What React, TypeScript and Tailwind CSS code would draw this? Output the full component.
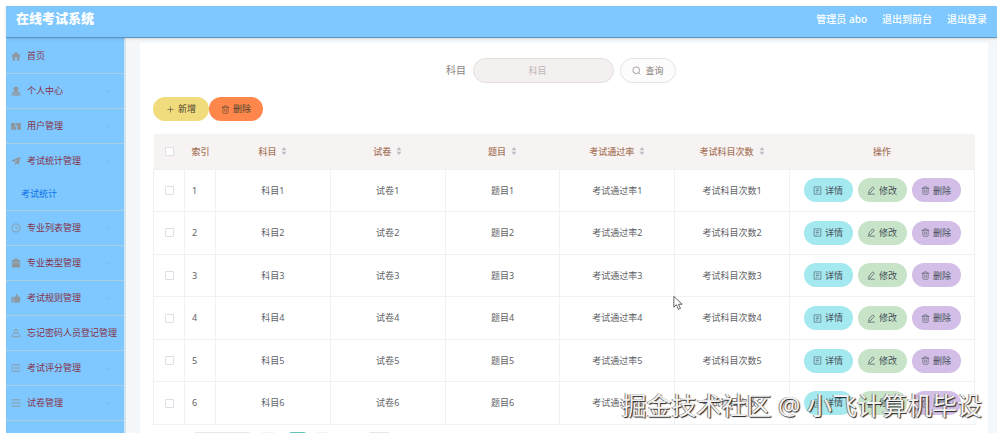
import type { ReactNode } from "react";
import { ChevronDown, ChevronUp, Plus, Trash2 } from "lucide-react";

type MenuItem = {
  label: string;
  icon: ReactNode;
  arrow?: "up" | "down";
  children?: string[];
};

const solid = (d: string) => (
  <svg viewBox="0 0 16 16" className="h-[10px] w-[10px]" fill="currentColor" aria-hidden="true">
    <path d={d} />
  </svg>
);

const outline = (d: string) => (
  <svg
    viewBox="0 0 16 16"
    className="h-[10px] w-[10px]"
    fill="none"
    stroke="currentColor"
    strokeWidth="1.5"
    aria-hidden="true"
  >
    <path d={d} />
  </svg>
);

const MENU: MenuItem[] = [
  { label: "首页", icon: solid("M8 1 1 7.5V9h1.500v6h4v-4.500h3V15h4V9H15V7.500z") },
  {
    label: "个人中心",
    icon: solid("M8 1a4 4 0 0 1 2 7.500v1h4l1 2H1l1-2h4v-1A4 4 0 0 1 8 1zM1 12.500h14V15H1z"),
    arrow: "down",
  },
  {
    label: "用户管理",
    icon: solid("M0 3h7v5H6v1h2v5H0V9h1V8H0zM8.500 3H16v5h-1v1h1v5H9.500V9h1V8h-2z"),
    arrow: "down",
  },
  {
    label: "考试统计管理",
    icon: solid("M15 1 .5 7 5 9.500 12 4 6.500 10.500V15l2.500-3 3.500 1.500z"),
    arrow: "up",
    children: ["考试统计"],
  },
  {
    label: "专业列表管理",
    icon: outline("M8 1.500a6.500 6.500 0 1 0 0 13a6.500 6.500 0 1 0 0-13zM8 4.500V8h3.500"),
    arrow: "down",
  },
  {
    label: "专业类型管理",
    icon: solid("M5 1h6v2h3.500v4h-13V3H5zM1.500 8h13v7h-13z"),
    arrow: "down",
  },
  {
    label: "考试规则管理",
    icon: solid("M1 6h3v9H1zM5 6h2l2-4.500 2 1V6h4l-1 9H5z"),
    arrow: "down",
  },
  {
    label: "忘记密码人员登记管理",
    icon: outline("M8 2a3 3 0 1 0 0 6a3 3 0 1 0 0-6zM6.500 8 2 11.500V14h12v-2.500L9.500 8"),
  },
  {
    label: "考试评分管理",
    icon: outline("M1 3h14M6 8h9M1 13h14M1 6.500 3.500 8 1 9.500"),
    arrow: "down",
  },
  { label: "试卷管理", icon: outline("M1 3h14M1 8h14M1 13h14"), arrow: "down" },
];

const COLUMNS = ["科目", "试卷", "题目", "考试通过率", "考试科目次数"];
const ROWS = [1, 2, 3, 4, 5, 6];

function SortArrows() {
  return (
    <svg viewBox="0 0 6 10" className="h-[8px] w-[6px] text-[#b9bcc4]" fill="currentColor" aria-hidden="true">
      <path d="M3 0 6 4H0zM3 10 0 6h6z" />
    </svg>
  );
}

function DetailIcon() {
  return (
    <svg viewBox="0 0 16 16" className="h-[9px] w-[9px]" fill="none" stroke="currentColor" aria-hidden="true">
      <path d="M2 1.500h12v13H2zM5 5h6M5 8h6M5 11h3M10 11h1" />
    </svg>
  );
}

function EditIcon() {
  return (
    <svg viewBox="0 0 16 16" className="h-[9px] w-[9px]" fill="none" stroke="currentColor" strokeWidth="1.200" aria-hidden="true">
      <path d="M10 1.500 13 4 6.500 11.500 3 13l.5-4zM1.500 14.500H14" />
    </svg>
  );
}

function SearchIcon() {
  return (
    <svg viewBox="0 0 16 16" className="h-[9px] w-[9px]" fill="none" stroke="currentColor" strokeWidth="1.300" aria-hidden="true">
      <path d="M7.500 1.500a6 6 0 1 0 0 12a6 6 0 1 0 0-12zM12 12l3 3" />
    </svg>
  );
}

function Checkbox({ label }: { label: string }) {
  return (
    <input
      type="checkbox"
      aria-label={label}
      className="block h-[9px] w-[9px] appearance-none rounded-[1px] border border-[#dcdfe6] bg-white"
    />
  );
}

function Sidebar() {
  return (
    <nav className="w-[118px] shrink-0 bg-[#7ec8ff] pt-px text-[9px]">
      <ul>
        {MENU.map((item) => (
          <li key={item.label} className="border-b border-[#a9cfe5]">
            <a href="#" className="flex h-[34px] items-center pr-3 pl-[5px] text-[#86324a]">
              <span className="mr-[6px] text-[#8f989e]">{item.icon}</span>
              <span className="whitespace-nowrap">{item.label}</span>
              {item.arrow === "down" && <ChevronDown size={7} className="ml-auto text-[#78aed8]" />}
              {item.arrow === "up" && <ChevronUp size={7} className="ml-auto text-[#78aed8]" />}
            </a>
            {item.children?.map((child) => (
              <a key={child} href="#" className="flex h-8 items-center pl-[15px] text-[#0b70e8]">
                {child}
              </a>
            ))}
          </li>
        ))}
      </ul>
    </nav>
  );
}

function DataTable() {
  return (
    <table className="h-[291px] w-full table-fixed border-collapse text-[9px] text-[#606266]">
      <colgroup>
        <col className="w-[31px]" />
        <col className="w-[31px]" />
        {COLUMNS.map((column) => (
          <col key={column} />
        ))}
        <col className="w-[185px]" />
      </colgroup>
      <thead>
        <tr className="h-[35px] bg-[#f7f3f2] text-[#a87860]">
          <th className="pl-[11px]">
            <Checkbox label="全选" />
          </th>
          <th className="pl-[7px] text-left font-medium whitespace-nowrap">索引</th>
          {COLUMNS.map((column) => (
            <th key={column} className="font-medium">
              <span className="flex items-center justify-center gap-[5px]">
                {column}
                <SortArrows />
              </span>
            </th>
          ))}
          <th className="font-medium">操作</th>
        </tr>
      </thead>
      <tbody>
        {ROWS.map((row) => (
          <tr key={row}>
            <td className="border border-[#eef2f3] pl-[11px]">
              <Checkbox label={`选择 ${row}`} />
            </td>
            <td className="border border-[#eef2f3] pl-[7px]">{row}</td>
            {COLUMNS.map((column) => (
              <td key={column} className="border border-[#eef2f3] text-center">
                {column}
                {row}
              </td>
            ))}
            <td className="border border-[#eef2f3]">
              <div className="flex justify-center gap-[5px] text-[#45505a]">
                <button className="flex h-6 w-[49px] items-center justify-center gap-[3px] rounded-full bg-[#a5e9f0]">
                  <DetailIcon />
                  详情
                </button>
                <button className="flex h-6 w-[49px] items-center justify-center gap-[3px] rounded-full bg-[#c8e4c8]">
                  <EditIcon />
                  修改
                </button>
                <button className="flex h-6 w-[49px] items-center justify-center gap-[3px] rounded-full bg-[#d2bee6]">
                  <Trash2 size={9} strokeWidth={1.5} />
                  删除
                </button>
              </div>
            </td>
          </tr>
        ))}
      </tbody>
    </table>
  );
}

function Pagination() {
  return (
    <div className="mt-[7px] flex gap-2 pl-[39px]">
      <span className="h-5 w-[60px] rounded-sm border border-[#e4e7ea]" />
      <span className="h-5 w-[16px] rounded-sm bg-[#f4f4f5]" />
      <button aria-label="第 1 页" className="ml-1 h-5 w-[19px] rounded-sm bg-[#62c4b4]" />
      <span className="h-5 w-[16px] rounded-sm bg-[#f4f4f5]" />
      <span className="ml-7 h-5 w-[25px] rounded-sm border border-[#e4e7ea]" />
    </div>
  );
}

export default function App() {
  return (
    <div className="relative flex h-screen flex-col overflow-hidden bg-white pt-[6px] pl-[6px] font-['Noto_Sans','Noto_Sans_CJK_SC',sans-serif]">
      <header className="z-10 flex h-8 shrink-0 items-center justify-between border-b border-[#5f94bd] bg-[#7ec8ff] pr-[10px] pb-[5px] pl-[10px] text-white shadow-sm">
        <h1 className="text-[13px] font-black">在线考试系统</h1>
        <div className="flex gap-[15px] text-[10px] font-medium">
          <span>管理员 abo</span>
          <a href="#">退出到前台</a>
          <a href="#">退出登录</a>
        </div>
      </header>

      <div className="flex min-h-0 flex-1">
        <Sidebar />
        <main className="min-w-0 flex-1 border-l-2 border-[#d3e2ec] bg-[#f5f8fa] pt-[5px] pr-[9px] pl-[14px]">
          <section className="h-full bg-white px-[13px] pt-[15px]">
            <form className="flex items-center justify-center pr-[6px] text-[10px] text-[#8a817d]">
              <label htmlFor="subject" className="mr-[7px]">
                科目
              </label>
              <input
                id="subject"
                placeholder="科目"
                className="h-[25px] w-[141px] rounded-full border border-[#e4dfdf] bg-[#f4f0f0] pr-5 pl-2 text-center text-[9px] placeholder:text-[#bdb5b5]"
              />
              <button
                type="button"
                className="ml-[6px] flex h-[25px] w-[56px] items-center justify-center gap-[4px] rounded-full border border-[#e6e2e2] bg-[#fdfcfc] text-[9px]"
              >
                <SearchIcon />
                查询
              </button>
            </form>

            <div className="mt-[14px] mb-[13px] flex text-[9px] text-[#4d4432]">
              <button className="flex h-6 w-[56px] items-center justify-center gap-[3px] rounded-full bg-[#f0dc7c]">
                <Plus size={9} strokeWidth={1.5} />
                新增
              </button>
              <button className="flex h-6 w-[54px] items-center justify-center gap-[3px] rounded-full bg-[#ff874b]">
                <Trash2 size={9} strokeWidth={1.5} />
                删除
              </button>
            </div>

            <DataTable />
            <Pagination />
          </section>
        </main>
      </div>

      <svg
        viewBox="0 0 12 18"
        className="absolute top-[295px] left-[673px] h-[16px] w-[10px]"
        fill="#fff"
        stroke="#444"
        aria-hidden="true"
      >
        <path d="M1 1v13l3-3 2.500 5.500 2.500-1L6.500 10.500H11z" />
      </svg>
      <div className="pointer-events-none absolute right-[15px] bottom-[9px] text-[25px] leading-[38px] whitespace-nowrap text-[#f2f2f2] [text-shadow:1px_1px_1px_#222,-1px_0_0_#888]">
        掘金技术社区 @ 小飞计算机毕设
      </div>
    </div>
  );
}
